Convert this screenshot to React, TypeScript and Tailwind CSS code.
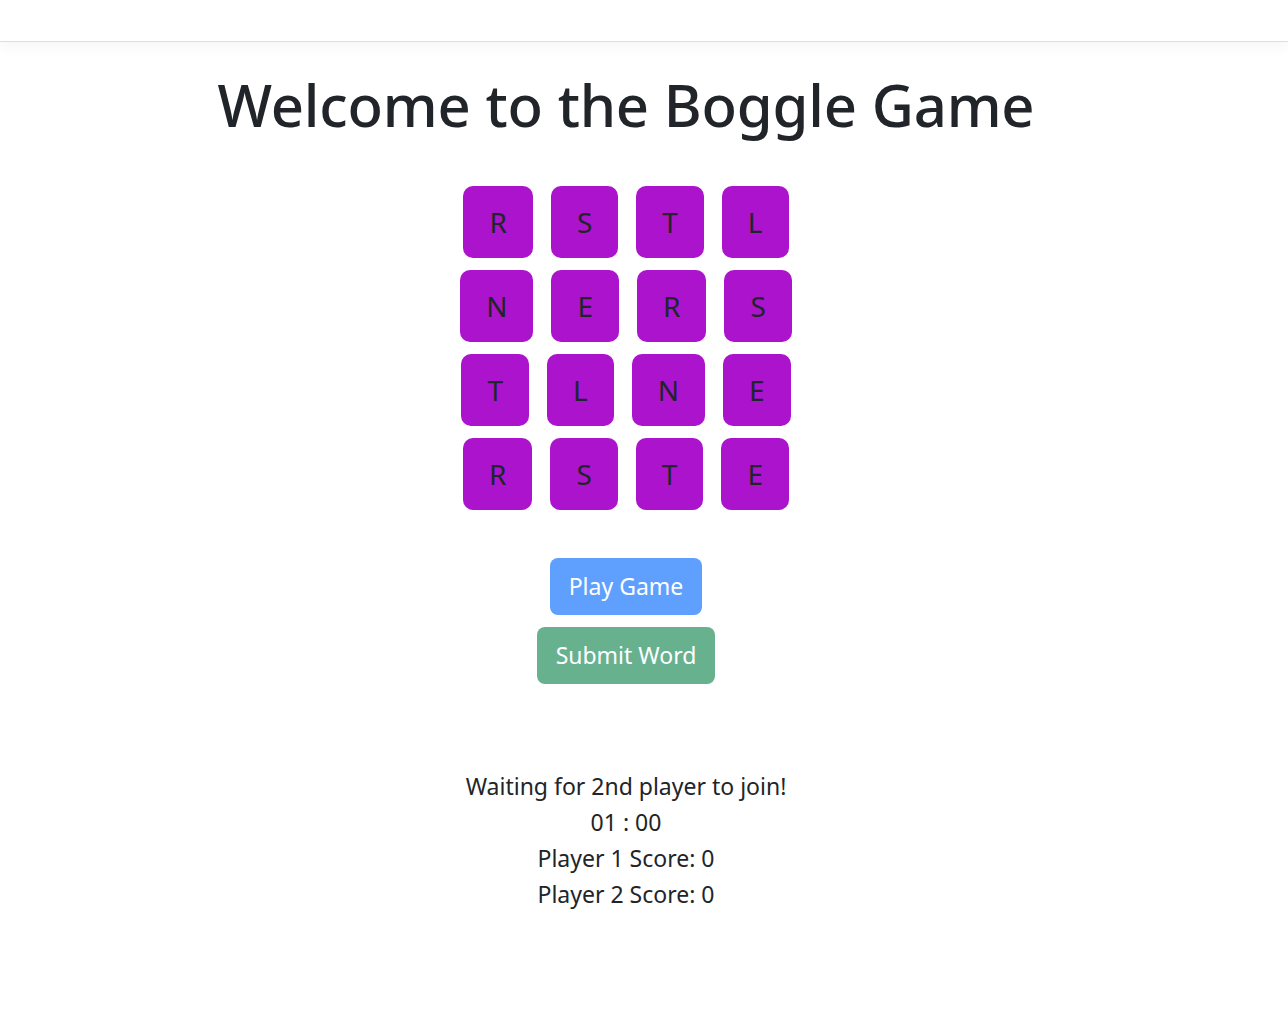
import React from "react";

const rows = [
  ["R", "S", "T", "L"],
  ["N", "E", "R", "S"],
  ["T", "L", "N", "E"],
  ["R", "S", "T", "E"],
];

export default function App() {
  return (
    <div
      className="min-h-screen bg-white text-[#212529]"
      style={{ fontFamily: '"Noto Sans", "Open Sans", sans-serif' }}
    >
      {/* Navbar */}
      <nav className="h-[42px] border-b border-[#dedede] bg-white shadow-[0_6px_12px_rgba(0,0,0,0.035)]" />

      <main className="pr-9 flex flex-col items-center">
        <h1 className="mt-[28px] text-[58px] leading-[1.2] font-medium tracking-[-0.2px]">
          Welcome to the Boggle Game
        </h1>

        {/* Board */}
        <div className="mt-[46px] flex flex-col items-center gap-3">
          {rows.map((row, r) => (
            <div key={r} className="flex items-center">
              {row.map((letter, i) => (
                <div
                  key={i}
                  className="mx-[9px] h-[72px] px-[26px] flex items-center justify-center rounded-[10px] bg-[#ab14cc] text-[28px] text-[#212529]"
                >
                  {letter}
                </div>
              ))}
            </div>
          ))}
        </div>

        {/* Actions */}
        <div className="mt-12 flex flex-col items-center gap-3">
          <button className="h-[57px] px-[19px] rounded-lg bg-[#5fa0fe] text-white text-[23px]">
            Play Game
          </button>
          <button className="h-[57px] px-[19px] rounded-lg bg-[#68b18f] text-white text-[23px]">
            Submit Word
          </button>
        </div>

        {/* Status */}
        <div className="mt-[84px] flex flex-col items-center text-[23px] leading-[36px]">
          <span>Waiting for 2nd player to join!</span>
          <span>01 : 00</span>
          <span>Player 1 Score: 0</span>
          <span>Player 2 Score: 0</span>
        </div>
      </main>
    </div>
  );
}
